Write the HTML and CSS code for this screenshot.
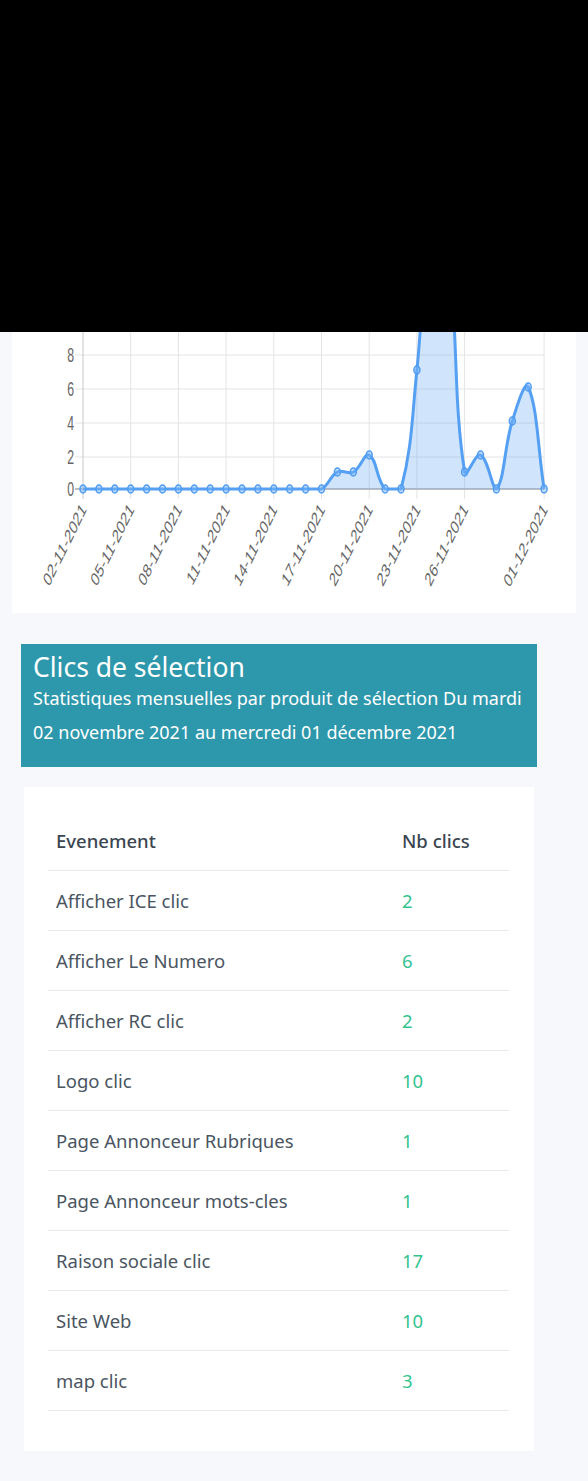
FILE: index.html
```html
<!DOCTYPE html>
<html lang="fr">
<head>
<meta charset="utf-8">
<title>Clics de sélection</title>
<link rel="stylesheet" href="styles.css">
</head>
<body>
<div class="overlay-top"></div>

<section class="chart-card">
  <svg class="chart" width="564" height="281" viewBox="12 332 564 281" xmlns="http://www.w3.org/2000/svg">
    <g class="grid">
      <line x1="75" y1="321" x2="544" y2="321"/>
      <line x1="75" y1="355" x2="544" y2="355"/>
      <line x1="75" y1="389" x2="544" y2="389"/>
      <line x1="75" y1="423" x2="544" y2="423"/>
      <line x1="75" y1="457" x2="544" y2="457"/>
      <line x1="130.7" y1="300" x2="130.7" y2="499"/>
      <line x1="178.4" y1="300" x2="178.4" y2="499"/>
      <line x1="226.1" y1="300" x2="226.1" y2="499"/>
      <line x1="273.8" y1="300" x2="273.8" y2="499"/>
      <line x1="321.5" y1="300" x2="321.5" y2="499"/>
      <line x1="369.2" y1="300" x2="369.2" y2="499"/>
      <line x1="416.9" y1="300" x2="416.9" y2="499"/>
      <line x1="464.6" y1="300" x2="464.6" y2="499"/>
      <line x1="544.1" y1="300" x2="544.1" y2="499"/>
    </g>
    <line class="axis" x1="83" y1="300" x2="83" y2="499"/>
    <line class="zero" x1="75" y1="489" x2="544" y2="489"/>

    <g class="ylabels">
      <text transform="translate(74,362) scale(0.63,1)">8</text>
      <text transform="translate(74,396) scale(0.63,1)">6</text>
      <text transform="translate(74,430) scale(0.63,1)">4</text>
      <text transform="translate(74,464) scale(0.63,1)">2</text>
      <text transform="translate(74,496) scale(0.63,1)">0</text>
    </g>

    <g class="xlabels">
      <text transform="translate(87,510) scale(0.63,1) rotate(-52)">02-11-2021</text>
      <text transform="translate(134.7,510) scale(0.63,1) rotate(-52)">05-11-2021</text>
      <text transform="translate(182.4,510) scale(0.63,1) rotate(-52)">08-11-2021</text>
      <text transform="translate(230.1,510) scale(0.63,1) rotate(-52)">11-11-2021</text>
      <text transform="translate(277.8,510) scale(0.63,1) rotate(-52)">14-11-2021</text>
      <text transform="translate(325.5,510) scale(0.63,1) rotate(-52)">17-11-2021</text>
      <text transform="translate(373.2,510) scale(0.63,1) rotate(-52)">20-11-2021</text>
      <text transform="translate(420.9,510) scale(0.63,1) rotate(-52)">23-11-2021</text>
      <text transform="translate(468.6,510) scale(0.63,1) rotate(-52)">26-11-2021</text>
      <text transform="translate(548.1,510) scale(0.63,1) rotate(-52)">01-12-2021</text>
    </g>

    <path class="area" d="M83,489 L321.5,489 C329.07,484.95 329.83,476.05 337.4,472 C342.56,469.24 348.14,474.76 353.3,472 C360.87,467.95 364.33,452.4 369.2,455 C377.05,459.2 376.16,479.45 385.1,489 C388.88,489 399.51,489 401,489 C412.23,447 411.94,417.7 416.9,370 C424.66,295.3 423.53,217.7 432.8,183 C436.25,170.1 445.65,223.3 448.7,251 C458.37,338.9 453.09,398.2 464.6,472 C465.81,479.75 475.63,452.4 480.5,455 C488.35,459.2 491.95,489 496.4,489 C504.67,480.16 504.03,447.5 512.3,421 C516.75,406.7 524.8,379.7 528.2,387 C537.52,406.9 537.74,448.2 544.1,489 Z"/>
    <path class="line" d="M83,489 L321.5,489 C329.07,484.95 329.83,476.05 337.4,472 C342.56,469.24 348.14,474.76 353.3,472 C360.87,467.95 364.33,452.4 369.2,455 C377.05,459.2 376.16,479.45 385.1,489 C388.88,489 399.51,489 401,489 C412.23,447 411.94,417.7 416.9,370 C424.66,295.3 423.53,217.7 432.8,183 C436.25,170.1 445.65,223.3 448.7,251 C458.37,338.9 453.09,398.2 464.6,472 C465.81,479.75 475.63,452.4 480.5,455 C488.35,459.2 491.95,489 496.4,489 C504.67,480.16 504.03,447.5 512.3,421 C516.75,406.7 524.8,379.7 528.2,387 C537.52,406.9 537.74,448.2 544.1,489"/>

    <g class="points">
      <ellipse cx="83" cy="489" rx="3" ry="4"/>
      <ellipse cx="98.9" cy="489" rx="3" ry="4"/>
      <ellipse cx="114.8" cy="489" rx="3" ry="4"/>
      <ellipse cx="130.7" cy="489" rx="3" ry="4"/>
      <ellipse cx="146.6" cy="489" rx="3" ry="4"/>
      <ellipse cx="162.5" cy="489" rx="3" ry="4"/>
      <ellipse cx="178.4" cy="489" rx="3" ry="4"/>
      <ellipse cx="194.3" cy="489" rx="3" ry="4"/>
      <ellipse cx="210.2" cy="489" rx="3" ry="4"/>
      <ellipse cx="226.1" cy="489" rx="3" ry="4"/>
      <ellipse cx="242" cy="489" rx="3" ry="4"/>
      <ellipse cx="257.9" cy="489" rx="3" ry="4"/>
      <ellipse cx="273.8" cy="489" rx="3" ry="4"/>
      <ellipse cx="289.7" cy="489" rx="3" ry="4"/>
      <ellipse cx="305.6" cy="489" rx="3" ry="4"/>
      <ellipse cx="321.5" cy="489" rx="3" ry="4"/>
      <ellipse cx="337.4" cy="472" rx="3" ry="4"/>
      <ellipse cx="353.3" cy="472" rx="3" ry="4"/>
      <ellipse cx="369.2" cy="455" rx="3" ry="4"/>
      <ellipse cx="385.1" cy="489" rx="3" ry="4"/>
      <ellipse cx="401" cy="489" rx="3" ry="4"/>
      <ellipse cx="416.9" cy="370" rx="3" ry="4"/>
      <ellipse cx="432.8" cy="183" rx="3" ry="4"/>
      <ellipse cx="448.7" cy="251" rx="3" ry="4"/>
      <ellipse cx="464.6" cy="472" rx="3" ry="4"/>
      <ellipse cx="480.5" cy="455" rx="3" ry="4"/>
      <ellipse cx="496.4" cy="489" rx="3" ry="4"/>
      <ellipse cx="512.3" cy="421" rx="3" ry="4"/>
      <ellipse cx="528.2" cy="387" rx="3" ry="4"/>
      <ellipse cx="544.1" cy="489" rx="3" ry="4"/>
    </g>
  </svg>
</section>

<header class="summary">
  <h2 class="summary-title">Clics de sélection</h2>
  <p class="summary-text">Statistiques mensuelles par produit de sélection Du mardi 02 novembre 2021 au mercredi 01 décembre 2021</p>
</header>

<section class="table-card">
  <table class="stats">
    <colgroup>
      <col class="col-event">
      <col class="col-count">
    </colgroup>
    <thead>
      <tr><th>Evenement</th><th>Nb clics</th></tr>
    </thead>
    <tbody>
      <tr><td>Afficher ICE clic</td><td class="num">2</td></tr>
      <tr><td>Afficher Le Numero</td><td class="num">6</td></tr>
      <tr><td>Afficher RC clic</td><td class="num">2</td></tr>
      <tr><td>Logo clic</td><td class="num">10</td></tr>
      <tr><td>Page Annonceur Rubriques</td><td class="num">1</td></tr>
      <tr><td>Page Annonceur mots-cles</td><td class="num">1</td></tr>
      <tr><td>Raison sociale clic</td><td class="num">17</td></tr>
      <tr><td>Site Web</td><td class="num">10</td></tr>
      <tr><td>map clic</td><td class="num">3</td></tr>
    </tbody>
  </table>
</section>
</body>
</html>
```
FILE: styles.css
```css
html, body {
  margin: 0;
  padding: 0;
}

body {
  background: #f6f8fc;
  font-family: "Noto Sans", "Open Sans", sans-serif;
  color: #495057;
}

.overlay-top {
  height: 332px;
  background: #000;
}

.chart-card {
  margin: 0 12px;
  height: 281px;
  background: #fff;
}

.chart {
  display: block;
}

.chart .grid line {
  stroke: #e4e4e4;
  stroke-width: 1;
}

.chart .axis {
  stroke: #c8c8c8;
  stroke-width: 1;
}

.chart .zero {
  stroke: #bfbfbf;
  stroke-width: 2;
}

.chart text {
  font-family: "Liberation Sans", Arial, sans-serif;
  font-size: 19.5px;
  fill: #666;
  text-anchor: end;
}

.chart .area {
  fill: rgba(100, 165, 245, 0.3);
  stroke: none;
}

.chart .line {
  fill: none;
  stroke: #55a0f2;
  stroke-width: 3;
  stroke-linejoin: round;
}

.chart .points ellipse {
  fill: rgba(120, 180, 250, 0.45);
  stroke: #4f9cf0;
  stroke-width: 1.5;
}

.summary {
  margin: 31px 0 0 21px;
  width: 516px;
  box-sizing: border-box;
  padding: 9px 12px 18px;
  background: #2d97ab;
  color: #fff;
}

.summary-title {
  margin: 0;
  font-size: 26.5px;
  font-weight: 400;
  line-height: 28px;
}

.summary-text {
  margin: 0;
  font-size: 18px;
  line-height: 34px;
}

.table-card {
  margin: 20px 0 32px 24px;
  width: 510px;
  box-sizing: border-box;
  padding: 24px 25px 40px 24px;
  background: #fff;
}

.stats {
  width: 100%;
  border-collapse: collapse;
  font-size: 18.5px;
}

.col-event {
  width: 346px;
}

.stats th,
.stats td {
  padding: 0 8px;
  text-align: left;
  vertical-align: middle;
}

.stats th {
  height: 59px;
  font-weight: 500;
  color: #3b4550;
  border-bottom: 1px solid #e9ecef;
}

.stats td {
  height: 59px;
  font-weight: 400;
  color: #4a5561;
  border-bottom: 1px solid #e9ecef;
}

.stats td.num {
  color: #34c38f;
}
```
